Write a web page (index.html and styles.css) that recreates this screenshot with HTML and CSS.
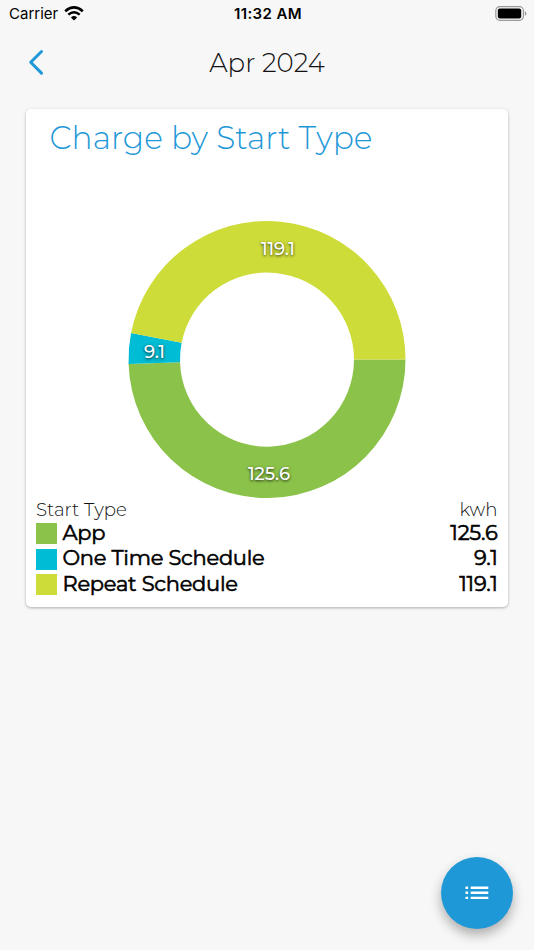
FILE: index.html
```
<!DOCTYPE html>
<html lang="en">
<head>
    <meta charset="UTF-8">
    <meta name="viewport" content="width=device-width, initial-scale=1.0">
    <title>Charge by Start Type</title>
    <link rel="stylesheet" href="styles.css">
</head>
<body>

<!-- Status bar -->
<div class="status-bar">
    <div class="carrier">
        <span>Carrier</span>
        <svg class="wifi" width="20" height="15" viewBox="0 0 20 15">
            <path d="M1.2 5.2 Q10 -2.4 18.8 5.2" fill="none" stroke="#000" stroke-width="2.6"/>
            <path d="M4.3 8.7 Q10 3.8 15.7 8.7" fill="none" stroke="#000" stroke-width="2.4"/>
            <path d="M6.9 11.4 Q10 8.8 13.1 11.4 L10 14.6 Z"/>
        </svg>
    </div>
    <span class="time">11:32 AM</span>
    <svg class="battery" width="32" height="15" viewBox="0 0 32 15">
        <rect x="0.8" y="0.7" width="27.6" height="13.6" rx="4" fill="none" stroke="#999" stroke-width="1.2"/>
        <rect x="2.8" y="2.6" width="23.4" height="9.8" rx="2"/>
        <path d="M29.8 5.2 Q31.4 5.8 31.4 7.5 Q31.4 9.2 29.8 9.8 Z" fill="#999"/>
    </svg>
</div>

<header class="nav">
    <a class="back" href="#" aria-label="Back">
        <svg width="18" height="28" viewBox="0 0 18 28">
            <path d="M14.5 3.5 L3.7 14.3 L14.5 25.1" fill="none" stroke="#1f98d7" stroke-width="3" stroke-linecap="round" stroke-linejoin="round"/>
        </svg>
    </a>
    <h1>Apr 2024</h1>
</header>

<main class="card">
    <h2>Charge by Start Type</h2>

    <svg class="chart" width="280" height="280" viewBox="-140 -140.5 280 280">
        <path fill="#8bc34a" d="M138.5 0 A138.5 138.5 0 0 1 -138.43 4.45 L-86.96 2.79 A87 87 0 0 0 87 0 Z"/>
        <path fill="#00bcd4" d="M-138.43 4.45 A138.5 138.5 0 0 1 -135.93 -26.57 L-85.38 -16.69 A87 87 0 0 0 -86.96 2.79 Z"/>
        <path fill="#cddc39" d="M-135.93 -26.57 A138.5 138.5 0 0 1 138.5 0 L87 0 A87 87 0 0 0 -85.38 -16.69 Z"/>
        <g class="chart-labels">
            <text x="11" y="-105" textLength="34">119.1</text>
            <text x="-112.5" y="-1.5" textLength="21">9.1</text>
            <text x="2" y="120" textLength="42">125.6</text>
        </g>
    </svg>

    <div class="legend">
        <div class="legend-head">
            <span>Start Type</span>
            <span>kwh</span>
        </div>
        <div class="legend-row">
            <span class="swatch app"></span>
            <span class="name">App</span>
            <span class="value">125.6</span>
        </div>
        <div class="legend-row">
            <span class="swatch one-time"></span>
            <span class="name">One Time Schedule</span>
            <span class="value">9.1</span>
        </div>
        <div class="legend-row">
            <span class="swatch repeat"></span>
            <span class="name">Repeat Schedule</span>
            <span class="value">119.1</span>
        </div>
    </div>
</main>

<button class="fab" aria-label="List">
    <svg width="24" height="14" viewBox="0 0 24 14" fill="#fff">
        <path d="M0.5 0.5h2.6v2.4H0.5z M5.7 0.5h17.6v2.4H5.7z M0.5 5.6h2.6V8H0.5z M5.7 5.6h17.6V8H5.7z M0.5 10.7h2.6v2.4H0.5z M5.7 10.7h17.6v2.4H5.7z"/>
    </svg>
</button>

</body>
</html>
```

FILE: styles.css
```
* {
    box-sizing: border-box;
}
body {
    margin: 0;
    height: 950px;
    overflow: hidden;
    background-color: #f7f7f7;
    color: #111;
    font-family: Montserrat, Inter, sans-serif;
}
.status-bar {
    display: grid;
    grid-template-columns: 1fr auto 1fr;
    align-items: center;
    height: 28px;
    padding: 0 7px 0 9px;
    font-family: Inter, sans-serif;
    font-size: 15px;
    color: #000;
}
.carrier {
    display: flex;
    align-items: center;
    gap: 6px;
}
.carrier span,
.time {
    padding-bottom: 1px;
}
.wifi {
    margin-top: -2px;
}
.time {
    font-weight: 600;
    letter-spacing: 0.4px;
}
.battery {
    justify-self: end;
    margin-top: -2px;
}
.nav {
    display: grid;
    grid-template-columns: 40px 1fr 40px;
    align-items: center;
    height: 68px;
    padding: 0 26px;
}
.back {
    height: 28px;
    padding-left: 1px;
}
h1 {
    margin: 0;
    padding-top: 1px;
    text-align: center;
    font-size: 26px;
    font-weight: 300;
}
.card {
    display: flex;
    flex-direction: column;
    width: 482px;
    height: 498px;
    margin: 13px 26px 0;
    background-color: #fff;
    border-radius: 5px;
    box-shadow: 0 1px 3px rgba(0, 0, 0, 0.3);
}
h2 {
    margin: 9px 0 0 23.5px;
    line-height: 40px;
    font-size: 31.3px;
    font-weight: 300;
    color: #1f98d7;
    white-space: nowrap;
}
.chart {
    align-self: center;
    margin-top: 61px;
}
.chart-labels {
    fill: #fff;
    font-size: 18px;
    font-weight: 500;
    text-anchor: middle;
    text-shadow: 0 1px 3px rgba(0, 0, 0, 0.8);
}
.legend {
    margin-top: -0.5px;
    padding: 0 10.5px 0 10px;
}
.legend-head {
    display: flex;
    justify-content: space-between;
    height: 22px;
    line-height: 22px;
    font-size: 18.2px;
    font-weight: 300;
}
.legend-row {
    display: flex;
    align-items: center;
    height: 25.7px;
    font-size: 21px;
    font-weight: 400;
    letter-spacing: -0.25px;
    color: #000;
    -webkit-text-stroke: 0.6px #000;
}
.swatch {
    width: 21px;
    height: 21px;
    margin-right: 5.5px;
}
.app {
    background-color: #8bc34a;
}
.one-time {
    background-color: #00bcd4;
}
.repeat {
    background-color: #cddc39;
}
.name,
.value {
    line-height: 24px;
    padding-bottom: 1.5px;
}
.value {
    margin-left: auto;
}
.fab {
    position: fixed;
    right: 21px;
    bottom: 21px;
    display: flex;
    align-items: center;
    justify-content: center;
    width: 72px;
    height: 72px;
    padding: 0;
    border: none;
    border-radius: 50%;
    background-color: #1f98d7;
    box-shadow: 0 6px 12px rgba(0, 0, 0, 0.3);
    cursor: pointer;
}
```
